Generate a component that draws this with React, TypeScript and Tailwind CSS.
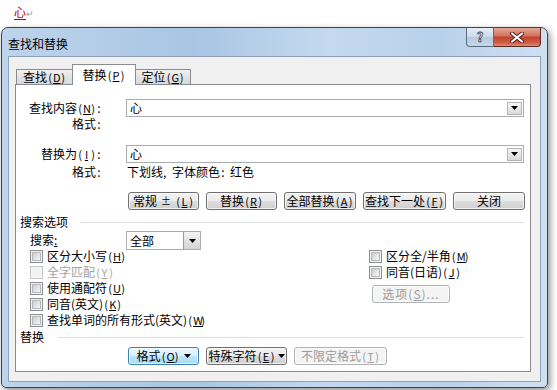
import React from 'react';

// accelerator key, drawn at the half-width cell size the dialog font uses
const K = ({ k }: { k: string }) => (
  <span className="inline-flex text-[11px]">
    <span className="w-[6px] text-center">(</span>
    <span className="w-[7px] text-center underline underline-offset-1">{k}</span>
    <span className="w-[6px] text-center">)</span>
  </span>
);

const C = () => <span className="inline-block w-[6px] text-center">:</span>;

const Btn = ({
  w,
  children,
  focus,
  disabled,
}: {
  w: string;
  children: React.ReactNode;
  focus?: boolean;
  disabled?: boolean;
}) => {
  let look =
    'border-[#707070] bg-[linear-gradient(#f2f2f2_0%,#ebebeb_50%,#dddddd_51%,#cfcfcf_100%)] text-black';
  if (focus)
    look =
      'border-[#3c7fb1] bg-[linear-gradient(#eaf6fd_0%,#d9f0fc_50%,#bee6fd_51%,#a7d9f5_100%)] text-black';
  if (disabled) look = 'border-[#adb2b5] bg-[#f4f4f4] text-[#9c9c9c]';
  return (
    <div
      className={`${w} h-[18px] shrink-0 flex items-center justify-center rounded-[3px] border shadow-[inset_0_0_0_1px_rgba(255,255,255,0.7)] ${look}`}
    >
      {children}
    </div>
  );
};

const Check = ({ label, disabled }: { label: React.ReactNode; disabled?: boolean }) => (
  <div className="h-[16px] flex items-center gap-[4px]">
    <div
      className={`w-[13px] h-[13px] border flex items-center justify-center ${
        disabled ? 'border-[#c6c6c6] bg-[#f7f7f7]' : 'border-[#8e8f8f] bg-[#f4f4f4]'
      }`}
    >
      <div
        className={`w-[9px] h-[9px] ${
          disabled
            ? 'bg-[#f1f1f1]'
            : 'bg-[linear-gradient(135deg,#c8ccd2,#eaeaea_70%,#f6f6f6)] border border-[#b5b9bf]'
        }`}
      />
    </div>
    <span className={disabled ? 'text-[#a3a3a3]' : 'text-black'}>{label}</span>
  </div>
);

const DownTri = () => (
  <svg width="7" height="4" viewBox="0 0 7 4">
    <path d="M0 0h7L3.5 4z" fill="#000" />
  </svg>
);

const Combo = ({ text }: { text: string }) => (
  <div className="w-[398px] h-[18px] border border-[#abadb3] bg-white flex items-center justify-between pl-[3px] pr-[1px]">
    <span>{text}</span>
    <div className="w-[15px] h-[13px] border border-[#b4b4b4] bg-[linear-gradient(#f5f5f5,#dadada)] flex items-center justify-center">
      <DownTri />
    </div>
  </div>
);

const Section = ({ title, line }: { title: string; line: string }) => (
  <div className="h-[16px] flex items-center ml-[4px] mr-[6px]">
    <span className={`${line} shrink-0`}>{title}</span>
    <div className="flex-1 h-px bg-[#dadfe5]" />
  </div>
);

export default function App() {
  return (
    <div className="w-[557px] h-[390px] bg-white overflow-hidden font-['Noto_Sans_CJK_SC','Noto_Sans',sans-serif] text-[12px] leading-[14px] text-black">
      <div className="h-[27px] pl-[14px] pt-[5px] flex items-start">
        <span className="text-[#c00000] underline underline-offset-2 decoration-[#c00000]">心</span>
        <span className="text-[#9a9a9a] text-[9px] mt-[2px]">↵</span>
      </div>

      <div className="ml-[1px] w-[547px] h-[361px] rounded-t-[7px] rounded-b-[5px] border border-[#3a4553] bg-[linear-gradient(90deg,#bdd4ec,#a9c5e3_35%,#c4d9ef_60%,#b9d0ea_80%,#cfe0f2)] shadow-[2px_3px_7px_rgba(0,0,0,0.45)] flex flex-col">
        {/* title bar */}
        <div className="h-[28px] flex items-start justify-between pl-[6px] pr-[6px]">
          <span className="mt-[9px] text-[12px] text-black">查找和替换</span>
          <div className="flex">
            <div className="w-[28px] h-[19px] rounded-bl-[4px] border border-t-0 border-[#5b6b80] bg-[linear-gradient(#e4edf7,#cad9ea_50%,#b6c9df_51%,#c7d7ea)] flex items-center justify-center">
              <span className="text-[13px] font-bold text-[#f4f7fb] [-webkit-text-stroke:0.8px_#3e4c5e]">?</span>
            </div>
            <div className="w-[47px] h-[19px] rounded-br-[4px] border border-t-0 border-l-0 border-[#5a2a24] bg-[linear-gradient(#e6a897,#d0705c_45%,#c2412d_50%,#cf5a43_80%,#e08b70)] flex items-center justify-center">
              <svg width="14" height="11" viewBox="0 0 14 11">
                <path d="M2 1.5l10 8M12 1.5l-10 8" stroke="#5a1c12" strokeWidth="4" strokeLinecap="round" />
                <path d="M2 1.5l10 8M12 1.5l-10 8" stroke="#fff" strokeWidth="2.2" strokeLinecap="round" />
              </svg>
            </div>
          </div>
        </div>

        {/* client area */}
        <div className="mx-[6px] h-[326px] border border-[#8da2ba] bg-[#f0f0f0] pt-[7px]">
          {/* tabs */}
          <div className="ml-[6px] flex items-end h-[21px] relative z-10">
            <div className="ml-[1px] w-[57px] h-[15px] border border-b-0 border-[#898c95] bg-[linear-gradient(#f2f2f2,#e3e3e3_50%,#d9d9d9)] flex items-center justify-center mb-px">
              查找<K k="D" />
            </div>
            <div className="w-[64px] h-[21px] -ml-px border border-b-0 border-[#898c95] bg-white flex items-start justify-center pt-[3px]">
              替换<K k="P" />
            </div>
            <div className="w-[56px] h-[15px] -ml-px border border-b-0 border-[#898c95] bg-[linear-gradient(#f2f2f2,#e3e3e3_50%,#d9d9d9)] flex items-center justify-center mb-px">
              定位<K k="G" />
            </div>
          </div>

          {/* panel */}
          <div className="ml-[6px] -mt-px w-[516px] h-[288px] border border-[#898c95] bg-white flex flex-col">
            <div className="mt-[14px] flex items-center">
              <div className="w-[86px] text-right">
                查找内容<K k="N" />
                <C />
              </div>
              <div className="ml-[24px]">
                <Combo text="心" />
              </div>
            </div>
            <div className="h-[14px] flex items-center">
              <div className="w-[86px] text-right">
                格式<C />
              </div>
            </div>

            <div className="mt-[14px] flex items-center">
              <div className="w-[86px] text-right">
                替换为<K k="I" />
                <C />
              </div>
              <div className="ml-[24px]">
                <Combo text="心" />
              </div>
            </div>
            <div className="mt-[2px] h-[14px] flex items-center">
              <div className="w-[86px] text-right">
                格式<C />
              </div>
              <div className="ml-[25px]">
                下划线<span className="inline-block w-[9px]">,</span>字体颜色<C />
                <span className="inline-block w-[4px]" />
                红色
              </div>
            </div>

            <div className="mt-[13px] ml-[112px] flex gap-[7px]">
              <Btn w="w-[71px]">
                常规 <span className="mx-[4px] text-[10px]">±</span>
                <K k="L" />
              </Btn>
              <Btn w="w-[71px]">
                替换<K k="R" />
              </Btn>
              <Btn w="w-[72px]">
                全部替换<K k="A" />
              </Btn>
              <Btn w="w-[83px]">
                查找下一处<K k="F" />
              </Btn>
              <Btn w="w-[72px]">关闭</Btn>
            </div>

            <div className="mt-[4px]">
              <Section title="搜索选项" line="w-[60px]" />
            </div>

            <div className="flex mt-[1px]">
              <div className="ml-[14px] w-[324px]">
                <div className="h-[17px] flex items-start">
                  <span className="w-[96px] mt-[2px]">
                    搜索<span className="underline">:</span>
                  </span>
                  <div className="w-[75px] h-[19px] border border-[#abadb3] bg-white flex items-stretch justify-between pl-[3px]">
                    <span className="self-center">全部</span>
                    <div className="w-[17px] border-l border-[#9a9a9a] bg-[linear-gradient(#f3f3f3,#d4d4d4)] flex items-center justify-center">
                      <DownTri />
                    </div>
                  </div>
                </div>
                <Check label={<>区分大小写<K k="H" /></>} />
                <Check label={<>全字匹配<K k="Y" /></>} disabled />
                <Check label={<>使用通配符<K k="U" /></>} />
                <Check label={<>同音(英文)<K k="K" /></>} />
                <Check label={<>查找单词的所有形式(英文)<K k="W" /></>} />
              </div>
              <div className="mt-[17px] ml-[15px]">
                <Check label={<>区分全/半角<K k="M" /></>} />
                <Check label={<>同音(日语)<K k="J" /></>} />
                <div className="mt-[5px] ml-[3px]">
                  <Btn w="w-[78px]" disabled>
                    <span className="tracking-[1px]">
                      选项(<span className="underline">S</span>)...
                    </span>
                  </Btn>
                </div>
              </div>
            </div>

            <div className="mt-[1px]">
              <Section title="替换" line="w-[38px]" />
            </div>

            <div className="mt-[2px] ml-[112px] flex gap-[7px]">
              <Btn w="w-[71px]" focus>
                格式<K k="O" />
                <span className="ml-[4px] mb-[1px]">
                  <DownTri />
                </span>
              </Btn>
              <Btn w="w-[81px]">
                特殊字符<K k="E" />
                <span className="ml-[2px] mb-[1px]">
                  <DownTri />
                </span>
              </Btn>
              <Btn w="w-[93px]" disabled>
                不限定格式<K k="T" />
              </Btn>
            </div>
          </div>
        </div>
      </div>
    </div>
  );
}
